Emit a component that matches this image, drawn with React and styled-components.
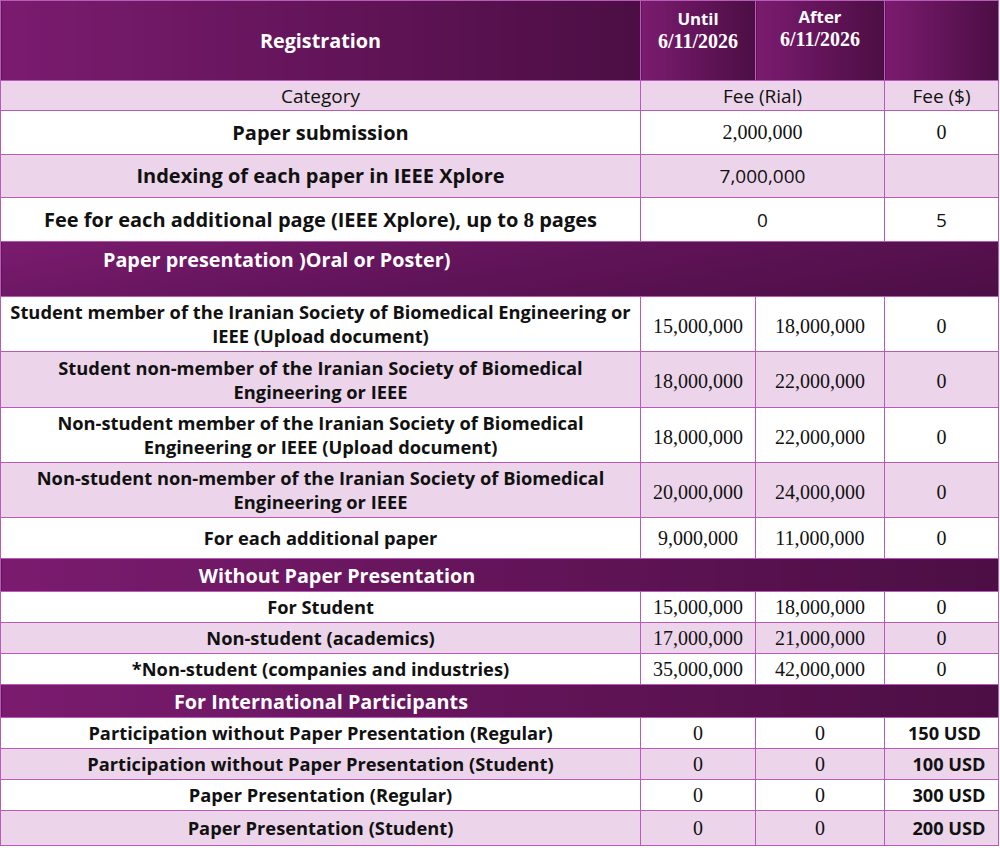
import React from "react";
import styled, { createGlobalStyle, css } from "styled-components";

const Global = createGlobalStyle`
  html, body { margin: 0; padding: 0; background: #ffffff; }
  body { font-family: "Open Sans", "Liberation Sans", sans-serif; color: #111; }
`;

const BORDER = "#b95ab9";
const TINT = "#ecd5ea";
const DARK = "#4c0e44";
const MID = "#7b1b6f";

const Table = styled.table`
  width: 998px;
  border-collapse: collapse;
  table-layout: fixed;
  margin: 0;
`;

const Row = styled.tr`
  height: ${(p) => p.$h}px;
  background: ${(p) => (p.$tint ? TINT : "#ffffff")};
`;

const Cell = styled.td`
  border: 1px solid ${BORDER};
  padding: 0;
  text-align: center;
  vertical-align: middle;
  white-space: nowrap;
`;

const HeadCell = styled(Cell)`
  background: linear-gradient(90deg, ${MID} 0%, ${DARK} 100%);
  color: #fff;
  font-weight: 700;
  font-size: 19.8px;
  vertical-align: ${(p) => (p.$top ? "top" : "middle")};
  padding-top: ${(p) => (p.$top ? p.$top : 0)}px;
`;

const HeadLabel = styled.div`
  font-size: 16.8px;
  font-weight: 700;
  line-height: 20px;
`;

const HeadDate = styled.div`
  font-family: "Liberation Serif", "Times New Roman", serif;
  font-size: 20px;
  font-weight: 700;
  line-height: 24px;
`;

const SectionCell = styled(Cell)`
  color: #fff;
  font-weight: 700;
  font-size: 19.8px;
  text-align: left;
  background: ${(p) =>
    p.$diag
      ? `linear-gradient(170deg, ${MID} 0%, #62145a 45%, ${DARK} 100%)`
      : `linear-gradient(90deg, ${MID} 0%, ${DARK} 100%)`};
  ${(p) =>
    p.$diag &&
    css`
      vertical-align: top;
      padding: 4px 0 0 102px;
    `}
`;

const SectionText = styled.span`
  display: inline-block;
  width: 640px;
  text-align: center;
  padding-left: ${(p) => p.$shift || 0}px;
  box-sizing: border-box;
`;

const Label = styled(Cell)`
  font-weight: 700;
  font-size: ${(p) => p.$size || 18.3}px;
  line-height: 24px;
`;

const Plain = styled(Cell)`
  font-weight: 400;
  font-size: 19px;
`;

const Serif = styled(Cell)`
  font-family: "Liberation Serif", "Times New Roman", serif;
  font-size: 20px;
  padding-top: ${(p) => p.$pt || 0}px;
`;

const SerifDigit = styled.span`
  font-family: "Liberation Serif", "Times New Roman", serif;
  font-size: 21px;
`;

const Usd = styled(Cell)`
  font-weight: 700;
  font-size: 18.2px;
  padding-left: ${(p) => p.$pl || 10}px;
`;

const paperRows = [
  ["Student member of the Iranian Society of Biomedical Engineering or", "IEEE (Upload document)", "15,000,000", "18,000,000", false, 55],
  ["Student non-member of the Iranian Society of Biomedical", "Engineering or IEEE", "18,000,000", "22,000,000", true, 56],
  ["Non-student member of the Iranian Society of Biomedical", "Engineering or IEEE (Upload document)", "18,000,000", "22,000,000", false, 55],
  ["Non-student non-member of the Iranian Society of Biomedical", "Engineering or IEEE", "20,000,000", "24,000,000", true, 55],
];

const noPaperRows = [
  ["For Student", "15,000,000", "18,000,000", false],
  ["Non-student (academics)", "17,000,000", "21,000,000", true],
  ["*Non-student (companies and industries)", "35,000,000", "42,000,000", false],
];

const intlRows = [
  ["Participation without Paper Presentation (Regular)", "150 USD", false, 31, 6],
  ["Participation without Paper Presentation (Student)", "100 USD", true, 31, 15],
  ["Paper Presentation (Regular)", "300 USD", false, 31, 15],
  ["Paper Presentation (Student)", "200 USD", true, 35, 15],
];

export default function App() {
  return (
    <>
      <Global />
      <Table>
        <colgroup>
          <col style={{ width: 640 }} />
          <col style={{ width: 115 }} />
          <col style={{ width: 129 }} />
          <col style={{ width: 114 }} />
        </colgroup>
        <tbody>
          <Row $h={80}>
            <HeadCell>Registration</HeadCell>
            <HeadCell $top={8}>
              <HeadLabel>Until</HeadLabel>
              <HeadDate>6/11/2026</HeadDate>
            </HeadCell>
            <HeadCell $top={6}>
              <HeadLabel>After</HeadLabel>
              <HeadDate>6/11/2026</HeadDate>
            </HeadCell>
            <HeadCell />
          </Row>
          <Row $h={30} $tint>
            <Plain>Category</Plain>
            <Plain colSpan={2}>Fee (Rial)</Plain>
            <Plain>Fee ($)</Plain>
          </Row>
          <Row $h={44}>
            <Label $size={20}>Paper submission</Label>
            <Serif colSpan={2}>2,000,000</Serif>
            <Serif>0</Serif>
          </Row>
          <Row $h={43} $tint>
            <Label $size={20}>Indexing of each paper in IEEE Xplore</Label>
            <Plain colSpan={2}>7,000,000</Plain>
            <Plain />
          </Row>
          <Row $h={44}>
            <Label $size={20}>
              Fee for each additional page (IEEE Xplore), up to <SerifDigit>8</SerifDigit> pages
            </Label>
            <Plain colSpan={2}>0</Plain>
            <Plain>5</Plain>
          </Row>
          <Row $h={55}>
            <SectionCell colSpan={4} $diag>
              Paper presentation )Oral or Poster)
            </SectionCell>
          </Row>
          {paperRows.map(([a, b, u, f, tint, h]) => (
            <Row key={a} $h={h} $tint={tint}>
              <Label>
                {a}
                <br />
                {b}
              </Label>
              <Serif $pt={4}>{u}</Serif>
              <Serif $pt={4}>{f}</Serif>
              <Serif $pt={4}>0</Serif>
            </Row>
          ))}
          <Row $h={41}>
            <Label>For each additional paper</Label>
            <Serif>9,000,000</Serif>
            <Serif>11,000,000</Serif>
            <Serif>0</Serif>
          </Row>
          <Row $h={33}>
            <SectionCell colSpan={4}>
              <SectionText $shift={32}>Without Paper Presentation</SectionText>
            </SectionCell>
          </Row>
          {noPaperRows.map(([a, u, f, tint]) => (
            <Row key={a} $h={31} $tint={tint}>
              <Label>{a}</Label>
              <Serif>{u}</Serif>
              <Serif>{f}</Serif>
              <Serif>0</Serif>
            </Row>
          ))}
          <Row $h={33}>
            <SectionCell colSpan={4}>
              <SectionText>For International Participants</SectionText>
            </SectionCell>
          </Row>
          {intlRows.map(([a, usd, tint, h, pl]) => (
            <Row key={a} $h={h} $tint={tint}>
              <Label>{a}</Label>
              <Serif>0</Serif>
              <Serif>0</Serif>
              <Usd $pl={pl}>{usd}</Usd>
            </Row>
          ))}
        </tbody>
      </Table>
    </>
  );
}
